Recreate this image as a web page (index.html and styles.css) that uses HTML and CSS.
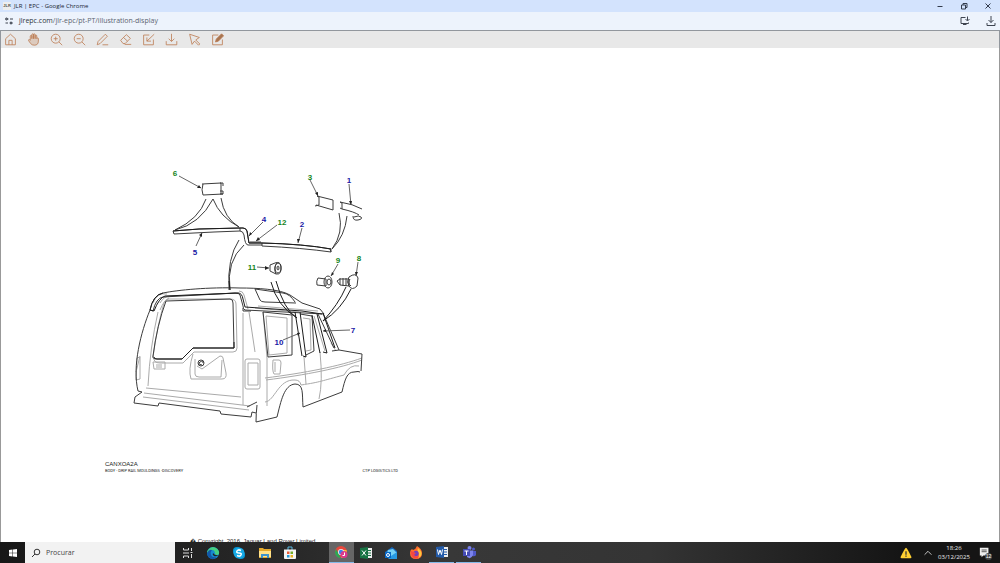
FILE: index.html
```html
<!DOCTYPE html>
<html lang="pt">
<head>
<meta charset="utf-8">
<title>JLR | EPC - Google Chrome</title>
<link rel="stylesheet" href="styles.css">
</head>
<body>
<header class="titlebar">
  <span class="favicon">JLR</span>
  <span class="window-title">JLR | EPC - Google Chrome</span>
  <div class="window-controls">
    <button aria-label="Minimizar"><svg viewBox="0 0 10 10"><path d="M2.5 5.5h5"/></svg></button>
    <button aria-label="Restaurar"><svg viewBox="0 0 10 10"><path d="M2.5 4h4v4h-4zM4 4V2.5h4v4H6.500"/></svg></button>
    <button aria-label="Fechar"><svg viewBox="0 0 10 10"><path d="M2.500 2.500l5 5m0-5l-5 5"/></svg></button>
  </div>
</header>
<nav class="addressbar">
  <button class="site-info" aria-label="Informações do site"><svg viewBox="0 0 10 10"><path d="M2 3h2.500M6 7h2.500M6 3h3M1.500 7h2.500"/><circle cx="2.500" cy="3" r="1"/><circle cx="7" cy="7" r="1"/></svg></button>
  <span class="url"><b>jlrepc.com</b>/jlr-epc/pt-PT/illustration-display</span>
  <div class="address-actions">
    <button aria-label="Instalar"><svg viewBox="0 0 12 12"><path d="M6.500 2.500H2v6h7.500V7.500M4 9.500h3.500M8.500 1.500v4M6.500 4l2 2 2-2"/></svg></button>
    <button aria-label="Transferências"><svg viewBox="0 0 12 12"><path d="M6 1v6.500M3.500 5L6 7.500 8.500 5M2 8v2.500h8V8"/></svg></button>
  </div>
</nav>
<div class="toolbar">
  <button aria-label="Início"><svg viewBox="0 0 16 16"><path d="M2 7l6-5.500L14 7v7.500H2zM6 14.500V9h4v5.500"/></svg></button>
  <button aria-label="Mover"><svg viewBox="0 0 16 16"><path class="palm" d="M4 9V4q0-1 1-1t1 1v3-5q0-1 1-1t1 1v5-5q0-1 1-1t1 1v5-3.500q0-1 1-1t1 1V7q0-1 1-1t1 1v3q0 5-5 5-3 0-4.500-2L2 9.500Q1.500 8 3 8z"/></svg></button>
  <button aria-label="Ampliar"><svg viewBox="0 0 16 16"><circle cx="7" cy="7" r="5.500"/><path d="M11 11l4 4M4.500 7h5M7 4.500v5"/></svg></button>
  <button aria-label="Reduzir"><svg viewBox="0 0 16 16"><circle cx="7" cy="7" r="5.500"/><path d="M11 11l4 4M4.500 7h5"/></svg></button>
  <button aria-label="Desenhar"><svg viewBox="0 0 16 16"><path d="M1.500 14.500l1-4 9-9 2.500 2.500-9 9zM8 14.500h7"/></svg></button>
  <button aria-label="Apagar"><svg viewBox="0 0 16 16"><path d="M2 9l7-7 5 4.500L7.500 13H5zM5.500 5.500l5 4.500M7 14h8"/></svg></button>
  <button aria-label="Importar"><svg viewBox="0 0 16 16"><path d="M9 2.500H2v12h12V8M15 1.500L6 10M6 5.500V10h5"/></svg></button>
  <button aria-label="Descarregar"><svg viewBox="0 0 16 16"><path d="M8 1v9M4.500 7L8 10.500 11.500 7M1.500 10v4.500h13V10"/></svg></button>
  <button aria-label="Selecionar"><svg viewBox="0 0 16 16"><path d="M2 1.500l12 4-4.500 3 5 5-1.500 1.500-5-5L5 14z"/></svg></button>
  <button aria-label="Editar"><svg viewBox="0 0 16 16"><path d="M9 2.500H2v12h12V8"/><path class="pen" d="M5.500 11l1-3.500 6.500-6.500 2.500 2.500L9 10z"/></svg></button>
</div>
<main class="viewer">
  <figure class="illustration">
    <svg class="drawing" viewBox="100 160 300 270" role="img" aria-label="Body drip rail mouldings">
      <g class="thin">
        <path d="M158 312q-8 35-10 74M153 357q4-30 11-54 1-4 5-4h61q6 0 6 5l1 44q0 4-4 4h-39l-11 11h-23q-7 0-6-6zM243 313v92M146 388l95 9M144 393l106 13M143 397l106 13M140 356l-4 16M137 358l3-1v22l-4 1zM249 312l6 40M245 361q0-2 2-2h11q2 0 2 2v26q0 2-2 2h-11q-2 0-2-2zM248 363h10v22h-10z"/>
        <path d="M153 362h12v7h-11zM156 365h6m-6 2h6M193 354q-5 16-2 25h31q5 0 4-6l-3-15q0-2-3-2l-18 13-5-3M195 359v15q0 3 4 3h22l1-17M153 303q4-11 14-9M160 303q4-7 10-7l69-3M160 310q4-10 9-12"/>
        <path d="M265 378c40-5 75-12 97-20M266 380c40-5 75-12 96-20M263 312l4 46v48M265 402c10-1 13-23 30-22q5 0 6 5c20-3 20-4 43-10q6-11 15-9M304 357l2 27M320 352q3 30-1 47M273 360h6q2 0 2 3l-1 11h-6q-2-3-1-14zM275 362v10M248 309l-4-14q-1-4-5-4M255 308l44 4M258 306l60 5M266 316l21 2v35l-18 2zM303 318l7 1 1 31-5 1M314 316l11 35M331 343l5 8"/>
      </g>
      <g class="ink">
        <path d="M150 310q3-15 13-17c15-3 45-6 77-5 16 0 40 1 50 7l12 8 18 6 4 5-79-4q-2-1-2-4l-3-11q-1-2-5-2l-72 4q-7 1-10 14zM150 310c-9 22-18 56-12 81l4 1-7 5-1 6 24 3 1-3 61 8 1 3 30 3 1-5 4 1"/>
        <path d="M255 289l5 11q1 2 5 2l31 1M255 289l28 4q7 1 12 9"/>
        <path d="M153 356q4-31 13-55l64-2q3 0 3 4l1 45h-41l-11 11h-25q-5 0-4-3zM263 312l29 3v40l-24 2zM300 314l12 2 2 35-8 4M323 313l16 37 23 4-1 17M339 350l-7 1M257 405q-1 9-1 17l21-5c4-16 7-32 18-33 9 0 7 10 8 23l39-15c3-13 5-20 12-20q5-1 6 0M247 407l10-5M243 308v3h8M318 314l16 34"/>
        <path d="M202 184l19-1m-18 12l20-1M203 184q-2 6 0 11M221 183v11m-1-11h3v3m-3 5h3v3h-3"/>
        <path d="M206 199q-7 20-31 31M213 199q-13 25-38 31M213 199q7 18 26 28M221 198q3 20 18 29M173 231l26-2 41-1v3l-26 1-40 2zM240 228h3q3 0 4 3l2 12h13M240 231q3 0 4 4 1 10 4 10h14M250 242h11"/>
        <path d="M262 243q42 1 69 6v3q-28-4-69-6zM330 249l1 3M239 240q-12 18-10 50M244 245q-18 16-14 45"/>
        <path d="M317 196l16 4v10l-17-5M317 196l2 1v8l-4 1M340 202q13 2 22 7M340 202l2 1v6q13 3 17 6M340 208l2 1M354 217q5-2 7 0t-3 3-5-4M339 213q5 20-7 36M347 216q-2 20-15 33"/>
      </g>
      <g class="bold">
        <path d="M173 231l26-2 41-1M240 228h3q3 0 4 3l2 12h13q42 1 69 6M150 310q3-15 13-17M271 282q6 24 26 36M276 281q8 29 21 37M346 287q-8 18-23 34M351 289q-10 21-28 32M229 281l1 9M150 310l4 1q5-13 11-15l73-3q4 0 5 6l2 8 57 4 20 3M295 312l7 44M300 312l6 45-3-1M312 315l8 38M317 314l10 39-4-1M323 313l12 35M154 357q0 2 3 2h25l11-11h41v-6"/>
      </g>
      <g class="ink">
        <path d="M270 265l5-2q5-2 6 3 1 9-5 8l-6-3zM277 263q-4 5-1 11"/><ellipse cx="278" cy="268" rx="3" ry="5"/><ellipse cx="278" cy="268" rx="1" ry="2"/>
        <path d="M318 278l8 1v7l-9-1q-1-4 1-7"/><ellipse cx="328" cy="282" rx="4" ry="6"/><ellipse cx="329" cy="282" rx="2" ry="3"/>
        <path d="M337 281l3-2 9 0v7l-9-1zM340 278v7m3-7v8m3-8v8M349 277q7-5 9 1l-1 8q-5 5-8 0-3-4 0-9M350 279q-3 4 1 7"/>
        <circle cx="201" cy="363" r="3"/><path d="M203 363q0-3-3-1t2 3"/>
      </g>
      <g class="leader">
        <path d="M179 176l22 12M196 246l6-13M263 222l-14 14M277 225l-21 16M302 228l-4 15M257 267l12 1M310 180l8 16M349 184l2 21M338 264l-7 12M358 262l-2 14M350 330l-27 1M283 340l17-7"/>
        <path class="tip" d="M201 188l-4 0 2-3zM202 233l0 4-3-2zM249 236l1-4 2 2zM256 241l2-4 2 3zM298 243l-1-4h3zM269 268l-4 2v-4zM318 196l-3-3 3-1zM351 205l-2-4h3zM331 276l1-4 2 2zM356 276l-1-4h3zM323 331l3-2v3zM300 333l-2 3-1-3z"/>
      </g>
      <g class="callouts">
        <text class="green" x="175" y="176">6</text><text class="green" x="310" y="180">3</text><text x="349" y="183">1</text>
        <text x="264" y="222">4</text><text class="green" x="282" y="225">12</text><text x="302" y="227">2</text><text x="195" y="255">5</text>
        <text class="green" x="252" y="270">11</text><text class="green" x="338" y="263">9</text><text class="green" x="359" y="261">8</text>
        <text x="353" y="333">7</text><text x="279" y="345">10</text>
      </g>
    </svg>
    <figcaption class="caption">
      <span class="code">CANXOA2A</span>
      <span class="details"><span>BODY - DRIP RAIL MOULDINGS -DISCOVERY</span><span>CTP LOGISTICS LTD</span></span>
    </figcaption>
  </figure>
  <p class="copyright">&#xFFFD; Copyright, 2016, Jaguar Land Rover Limited</p>
</main>
<footer class="taskbar">
  <button class="start" aria-label="Iniciar"><svg viewBox="0 0 10 10"><path fill="#fff" d="M1 2l3.500-.5v3.200H1zM5 1.400L9 1v3.700H5zM1 5.200h3.500v3.300L1 8zM5 5.200h4V9l-4-.4z"/></svg></button>
  <label class="search"><svg viewBox="0 0 10 10"><circle cx="6" cy="4" r="2.800"/><path d="M4 6L1 9"/></svg><input type="text" placeholder="Procurar" aria-label="Procurar"></label>
  <div class="pinned">
    <button aria-label="Vista de tarefas"><svg viewBox="0 0 14 14"><path d="M2.500 2v2h5V2M2.500 12v-2h5v2M2 7h6M10.500 2v3m0 3v4M9.500 6.500h2" fill="none" stroke="#ddd"/></svg></button>
    <button aria-label="Edge"><svg viewBox="0 0 14 14"><circle cx="7" cy="7" r="6" fill="#168ad0"/><path fill="#45cf83" d="M2 4Q5 0 9 1.500 14 4 13 8q-2 2-4 0Q9 4 6 4 3 4 1 7q0-2 1-3"/><path fill="#1258a7" d="M1 7q2-4 5-3-2 2-1 5t6 2Q7 15 3 11.500 1 10 1 7"/><path fill="#222" d="M7 7q2 3 6 2-3 2-5 1T7 7"/></svg></button>
    <button aria-label="Skype"><svg viewBox="0 0 14 14"><circle cx="5" cy="5" r="4" fill="#0795d5"/><circle cx="9" cy="9" r="4" fill="#0795d5"/><circle cx="7" cy="7" r="5.500" fill="#16a9e5"/><path d="M9 4.500Q6 3 5 5t2 2q3 0 2 2t-4 .5" fill="none" stroke="#fff" stroke-width="1.500"/></svg></button>
    <button aria-label="Explorador"><svg viewBox="0 0 14 14"><path fill="#e3a92d" d="M1 2h4l1 1h7v9H1z"/><path fill="#ffe18a" d="M1 5h12v6H1z"/><path fill="#3d93ce" d="M3 8h8v4H9v-2H5v2H3z"/></svg></button>
    <button aria-label="Loja"><svg viewBox="0 0 14 14"><path d="M5 4V1h4v3" fill="none" stroke="#59b9e0"/><path fill="#f4f4f4" d="M1 3.500h12V12q0 1-1 1H2q-1 0-1-1z"/><path fill="#e95b36" d="M4 5.500h2.500V8H4z"/><path fill="#75ad28" d="M7.500 5.500H10V8H7.500z"/><path fill="#2196d7" d="M4 9h2.500v2.500H4z"/><path fill="#eab322" d="M7.500 9H10v2.500H7.500z"/></svg></button>
  </div>
  <div class="running">
    <button class="open active" aria-label="Chrome"><svg viewBox="0 0 14 14"><circle cx="7" cy="7" r="6" fill="#e9473c"/><path fill="#29a855" d="M2 4l5 9Q2 13 1 8q0-2 1-4"/><path fill="#f9c736" d="M8 5h4.500q1.500 6-5 8z"/><circle cx="7" cy="7" r="3" fill="#eee"/><circle cx="7" cy="7" r="2.200" fill="#3d80ed"/><circle cx="10" cy="9.500" r="3.500" fill="#db398b"/><path d="M10.500 7.500v3h-2" fill="none" stroke="#fff"/></svg></button>
    <button aria-label="Excel"><svg viewBox="0 0 14 14"><path fill="#eee" d="M7 2h6v10H7z"/><path fill="#187344" d="M1 2l8-1v12l-8-1z"/><path d="M3 4.500l4 5m0-5l-4 5" stroke="#fff"/><path d="M9 4.500h3M9 7h3M9 9.500h3" stroke="#187344"/></svg></button>
    <button aria-label="Correio"><svg viewBox="0 0 14 14"><path fill="#1769bd" d="M1 6l7-5 5 4v7H3z"/><path fill="#75d1f5" d="M4 4l5-1 4 4-5 4-5-4z"/><path fill="#279ae3" d="M4 12l9-6v7H5z"/><path fill="#0868c6" d="M1 6h6v6H1z"/><circle cx="4" cy="9" r="1.500" fill="none" stroke="#fff"/></svg></button>
    <button aria-label="Firefox"><svg viewBox="0 0 14 14"><path fill="#ff6d2d" d="M3 3l1 1Q7 3 8 0q5 3 5 7 0 6-6 6T1 7q0-3 2-4"/><path fill="#ffc63c" d="M9 2q5 4 3 8l-3 2q2-3 0-6-1-2 0-4"/><circle cx="7" cy="7.500" r="2.700" fill="#7441b8"/><path fill="#f44743" d="M2 5l5 2-2 2q3 3 5 0-1 5-5 3-3-1-3-7"/></svg></button>
    <button class="open" aria-label="Word"><svg viewBox="0 0 14 14"><path fill="#eee" d="M7 2h6v10H7z"/><path fill="#245ba8" d="M1 2l8-1v12l-8-1z"/><path d="M2.500 4.500l1 5L5 5l1.500 4.500 1-5" fill="none" stroke="#fff"/><path d="M9 4.500h3M9 7h3M9 9.500h3" stroke="#245ba8"/></svg></button>
    <button class="open" aria-label="Teams"><svg viewBox="0 0 14 14"><circle cx="7.500" cy="3" r="2" fill="#7b83eb"/><circle cx="11.500" cy="4" r="1.500" fill="#5059c9"/><path fill="#5059c9" d="M10 6h4v4q-1 2-4 1z"/><path fill="#7b83eb" d="M5 5.500h6V10q-2 5-6 2z"/><path fill="#444bb5" d="M1 4h7v7H1z"/><path d="M2.500 6h4m-2 0v4" stroke="#fff"/></svg></button>
  </div>
  <div class="tray">
    <button aria-label="Aviso"><svg viewBox="0 0 14 14"><path fill="#ffcf32" d="M7 1q1 0 6.500 11-.5 1-1.500 1H2q-1 0-1.500-1Q6 1 7 1"/><path d="M7 5v4m0 1v1.500" stroke="#333" stroke-width="1.500"/></svg></button>
    <button aria-label="Mostrar ícones ocultos"><svg viewBox="0 0 14 14"><path d="M3 9l4-4 4 4" fill="none" stroke="#ddd"/></svg></button>
    <time class="clock"><span>18:26</span><span>03/12/2025</span></time>
    <button class="notifications" aria-label="Notificações"><svg viewBox="0 0 14 14"><path fill="#eee" d="M1 1h10v9H5l-2 2v-2H1z"/><path d="M3 3.500h6M3 5.500h6" stroke="#444"/></svg><span class="badge">12</span></button>
  </div>
</footer>
</body>
</html>
```
FILE: styles.css
```css
* { box-sizing: border-box; }
body {
  margin: 0;
  height: 100vh;
  display: flex;
  flex-direction: column;
  overflow: hidden;
  background: #fff;
  font-family: "Open Sans", "Noto Sans", sans-serif;
}
button {
  display: flex;
  align-items: center;
  justify-content: center;
  padding: 0;
  border: 0;
  background: none;
}
.titlebar {
  display: flex;
  align-items: center;
  flex: 0 0 12px;
  padding: 0 7px 0 3px;
  background: #d3e3fd;
  color: #202530;
}
.favicon {
  width: 8px;
  background: #eee;
  color: #555;
  font: bold 4px/8px "Liberation Sans", sans-serif;
  text-align: center;
}
.window-title { margin-left: 3px; font-size: 6px; line-height: 12px; }
.window-controls { display: flex; margin-left: auto; gap: 14px; }
.window-controls svg { width: 10px; height: 10px; fill: none; stroke: #333c4d; stroke-width: 1; }
.addressbar {
  display: flex;
  align-items: center;
  flex: 0 0 18px;
  padding: 0 3px 0 4px;
  background: #edf3fc;
}
.addressbar svg { fill: none; stroke: #3e4450; }
.site-info svg { width: 10px; height: 10px; }
.url { margin-left: 5px; color: #5c6470; font-size: 7px; line-height: 18px; }
.url b { color: #30353d; font-weight: 400; }
.address-actions { display: flex; margin-left: auto; gap: 14px; }
.address-actions svg { width: 12px; height: 12px; }
.toolbar {
  display: flex;
  align-items: center;
  flex: 0 0 18px;
  gap: 10px;
  padding: 0 3px;
  border: 1px solid #92979d;
  border-width: 1px 1px 0;
  background: #e8e8e8;
}
.toolbar svg { width: 13px; height: 13px; fill: none; stroke: #bd7d54; stroke-width: 1; }
.toolbar .palm { fill: #dccabd; }
.toolbar .pen { fill: #a87550; }
.viewer {
  flex: 1;
  min-height: 0;
  overflow: hidden;
  padding-top: 112px;
  border-left: 1px solid #999;
  border-right: 1px solid #999;
}
.illustration { width: 300px; margin: 0 0 0 99px; }
.drawing { display: block; width: 100%; fill: none; stroke-linejoin: round; }
.thin { stroke: #aaa; stroke-width: 1; }
.ink { stroke: #3c3c3c; stroke-width: 1; }
.bold { stroke: #1c1c1c; stroke-width: 1; }
.leader { stroke: #666; stroke-width: 1; }
.tip { fill: #222; stroke: none; }
.callouts { fill: #1717a5; font: bold 8px "Liberation Sans", sans-serif; text-anchor: middle; }
.callouts .green { fill: #16851d; }
.caption { padding: 30px 2px 0 5px; color: #222; font-family: "Liberation Sans", sans-serif; }
.code { display: block; font-size: 6px; line-height: 8px; }
.details { display: flex; justify-content: space-between; font-family: Roboto, sans-serif; font-size: 4px; line-height: 5px; }
.copyright { margin: 63px 0 0 189px; color: #222; font: 6px/10px "Liberation Sans", sans-serif; }
.taskbar {
  display: flex;
  flex: 0 0 21px;
  background: linear-gradient(90deg, #171717, #292929 30%, #383838 45%, #343434 65%, #151515 90%);
  color: #eee;
}
.taskbar button svg { width: 14px; height: 14px; }
.start { width: 25px; }
.taskbar .start svg { width: 10px; height: 10px; }
.search {
  display: flex;
  align-items: center;
  width: 150px;
  padding-left: 6px;
  gap: 5px;
  background: #f2f2f2;
}
.search svg { width: 10px; height: 10px; fill: none; stroke: #333; }
.search input {
  width: 100px;
  padding: 0;
  border: 0;
  outline: 0;
  background: none;
  font: 7px/20px "Open Sans", sans-serif;
}
.search input::placeholder { color: #444; opacity: 1; }
.pinned { display: flex; width: 128px; }
.running { display: flex; width: 153px; margin-left: 26px; }
.pinned button, .running button { flex: 1; }
.running .open { border-bottom: 1px solid #83b9e8; margin: 0 1px; }
.running .active { margin: 0; background: #666; }
.tray { display: flex; align-items: center; margin-left: auto; padding-right: 9px; }
.taskbar .tray svg { width: 12px; height: 12px; }
.tray button + button { margin-left: 10px; }
.clock { display: flex; flex-direction: column; width: 36px; margin-left: 2px; font-size: 6px; line-height: 9px; text-align: center; }
.notifications { position: relative; margin-left: 7px; }
.badge {
  position: absolute;
  right: -1px;
  bottom: -1px;
  width: 7px;
  border-radius: 4px;
  background: #444;
  color: #fff;
  font: 5px/7px "Liberation Sans", sans-serif;
}
```
